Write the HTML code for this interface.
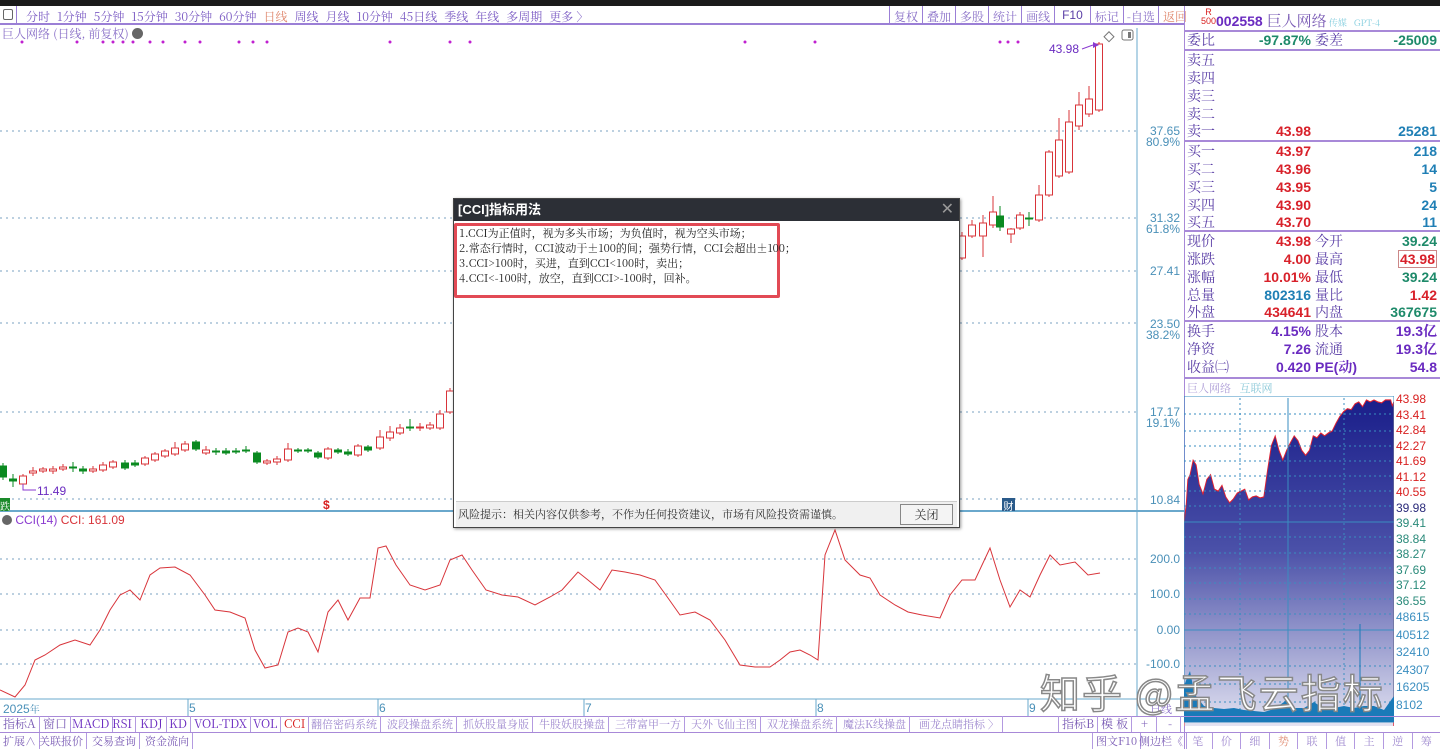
<!DOCTYPE html>
<html><head><meta charset="utf-8"><style>
*{margin:0;padding:0;box-sizing:border-box}
body{width:1440px;height:749px;overflow:hidden;background:#fff;position:relative;font-family:"Liberation Sans","Noto Sans CJK SC",sans-serif;}
.a{position:absolute;white-space:nowrap}
.tb span{display:inline-block;margin-right:7px}
.cjk{font-family:"Noto Serif CJK SC","Noto Sans CJK SC",serif}
.rp div.r{position:absolute;left:1187px;width:252px;height:18px;font-size:14px;line-height:18px;font-family:"Liberation Sans",sans-serif}
.rp .l{position:absolute;left:0;color:#5a3ea6;font-family:"Noto Serif CJK SC",serif}
.rp .v1{position:absolute;right:128px;font-weight:bold}
.rp .l2{position:absolute;left:128px;color:#5a3ea6;font-family:"Noto Serif CJK SC",serif}
.rp .v2{position:absolute;right:2px;font-weight:bold}
.rp .v2 .z,.rp .l .z{font-family:"Noto Serif CJK SC",serif}
.red{color:#d8212a}.grn{color:#1e8a6a}.blu{color:#1f7fb5}.pur{color:#6a2bc0}
.sep{position:absolute;left:1184px;width:256px;height:2px;background:#a889d8}
.bt{position:absolute;height:16px;font-size:12px;line-height:16px;border-right:1px solid #b39ae0;padding:0 3px;color:#7a5bb5}
</style></head><body>
<div class="a" style="left:0;top:0;width:1440px;height:6px;background:#1a1a1a"></div>
<div class="a" style="left:0;top:6px;width:1184px;height:19px;border-bottom:2px solid #9b7fd6;"></div>
<div class="a" style="left:3px;top:9px;width:10px;height:11px;border:1px solid #666;border-radius:2px"></div>
<div class="a" style="left:16px;top:6px;width:1px;height:19px;background:#9b7fd6"></div>
<div class="a tb cjk" style="left:26px;top:8px;font-size:12px;color:#7c5cc4;"><span>分时</span><span>1分钟</span><span>5分钟</span><span>15分钟</span><span>30分钟</span><span>60分钟</span><span style="color:#e08a70">日线</span><span>周线</span><span>月线</span><span>10分钟</span><span>45日线</span><span>季线</span><span>年线</span><span>多周期</span><span>更多 〉</span></div>
<div class="a cjk" style="left:889px;top:6px;height:19px;font-size:12px;color:#8a70c8;display:flex">
<span style="border-left:1px solid #9b7fd6;padding:2px 4px">复权</span><span style="border-left:1px solid #9b7fd6;padding:2px 4px">叠加</span><span style="border-left:1px solid #9b7fd6;padding:2px 4px">多股</span><span style="border-left:1px solid #9b7fd6;padding:2px 4px">统计</span><span style="border-left:1px solid #9b7fd6;padding:2px 4px">画线</span><span style="border-left:1px solid #9b7fd6;padding:2px 7px;color:#5a3ea6;font-family:'Liberation Sans',sans-serif">F10</span><span style="border-left:1px solid #9b7fd6;padding:2px 4px">标记</span><span style="border-left:1px solid #9b7fd6;padding:2px 3px">-自选</span><span style="border-left:1px solid #9b7fd6;padding:2px 4px;color:#e08a70">返回</span></div>
<div class="a cjk" style="left:2px;top:25px;font-size:12px;color:#8a70c8">巨人网络 (日线, 前复权) <span style="display:inline-block;width:11px;height:11px;border-radius:50%;background:#666;vertical-align:-1px"></span></div>

<svg class="a" style="left:0;top:0" width="1184" height="749">
<g stroke="#7aa0c0" stroke-dasharray="2,4" stroke-width="1">
<line x1="0" y1="131" x2="1137" y2="131"/><line x1="0" y1="218" x2="1137" y2="218"/><line x1="0" y1="271" x2="1137" y2="271"/><line x1="0" y1="323" x2="1137" y2="323"/><line x1="0" y1="412" x2="1137" y2="412"/><line x1="0" y1="499" x2="1137" y2="499"/>
<line x1="0" y1="559" x2="1137" y2="559"/><line x1="0" y1="594" x2="1137" y2="594"/><line x1="0" y1="630" x2="1137" y2="630"/><line x1="0" y1="664" x2="1137" y2="664"/>
</g>
<line x1="1137" y1="28" x2="1137" y2="716" stroke="#6aa8cc"/>
<line x1="0" y1="511" x2="1184" y2="511" stroke="#6aa8cc" stroke-width="2"/>
<line x1="0" y1="699" x2="1137" y2="699" stroke="#6aa8cc"/>
<line x1="1137" y1="699" x2="1184" y2="699" stroke="#6aa8cc"/>
<g stroke="#6aa8cc"><line x1="188" y1="699" x2="188" y2="716"/><line x1="378" y1="699" x2="378" y2="716"/><line x1="584" y1="699" x2="584" y2="716"/><line x1="816" y1="699" x2="816" y2="716"/><line x1="1028" y1="699" x2="1028" y2="716"/></g>
<g fill="#c020d0"><circle cx="22" cy="42" r="1.5"/><circle cx="77" cy="42" r="1.5"/><circle cx="103" cy="42" r="1.5"/><circle cx="113" cy="42" r="1.5"/><circle cx="123" cy="42" r="1.5"/><circle cx="133" cy="42" r="1.5"/><circle cx="150" cy="42" r="1.5"/><circle cx="163" cy="42" r="1.5"/><circle cx="185" cy="42" r="1.5"/><circle cx="200" cy="42" r="1.5"/><circle cx="239" cy="42" r="1.5"/><circle cx="253" cy="42" r="1.5"/><circle cx="267" cy="42" r="1.5"/><circle cx="390" cy="42" r="1.5"/><circle cx="450" cy="42" r="1.5"/><circle cx="470" cy="42" r="1.5"/><circle cx="745" cy="42" r="1.5"/><circle cx="815" cy="42" r="1.5"/><circle cx="1000" cy="42" r="1.5"/><circle cx="1008" cy="42" r="1.5"/><circle cx="1018" cy="42" r="1.5"/></g>
<g id="cd"></g>
<polyline fill="none" stroke="#d8343a" stroke-width="1" points="0,690 15,697 25,685 35,660 45,655 60,645 75,640 90,645 100,630 110,610 120,595 130,590 140,600 150,575 160,568 175,567 190,575 205,595 215,610 230,612 245,618 255,650 265,668 278,665 288,632 298,628 308,632 318,652 328,612 338,600 348,620 360,598 370,598 378,548 386,546 396,565 410,585 425,590 440,585 450,560 462,555 472,570 486,590 502,595 518,597 535,605 550,597 562,590 578,572 588,580 600,590 612,570 625,572 640,575 655,580 668,598 680,615 695,612 710,620 725,640 740,665 755,667 770,667 780,660 790,652 800,650 810,655 818,660 825,555 835,530 845,560 860,575 870,578 880,595 895,605 908,612 922,615 940,618 950,595 962,580 975,580 990,548 1000,580 1010,607 1020,590 1030,597 1040,575 1050,555 1060,565 1075,562 1088,575 1100,573"/>
<polyline fill="none" stroke="#8a3ad0" points="1082,49 1093,45"/><polygon fill="#8a3ad0" points="1093,42 1099,45 1093,48"/>
<polyline fill="none" stroke="#8a3ad0" points="36,490 23,490 23,484"/>
<rect x="1106" y="33" width="7" height="7" fill="none" stroke="#777" transform="rotate(45 1109 36)"/>
<rect x="1122" y="30" width="11" height="10" rx="2" fill="none" stroke="#777"/><rect x="1128" y="32" width="3" height="6" fill="#777"/>
</svg>
<div class="a" style="left:1049px;top:42px;font-size:12px;color:#6a2bc0">43.98</div>
<div class="a" style="left:37px;top:484px;font-size:12px;color:#6a2bc0">11.49</div>
<div class="a cjk" style="left:0;top:498px;width:10px;height:13px;background:#1a8a2a;color:#fff;font-size:10px">跌</div>
<div class="a" style="left:323px;top:498px;font-size:12px;color:#d82020;font-weight:bold">$</div>
<div class="a" style="left:1002px;top:498px;width:13px;height:13px;background:#2a5a8a;color:#fff;font-size:10px;text-align:center">财</div>
<div class="a" style="left:2px;top:513px;font-size:12px;color:#8a3ad0"><span style="display:inline-block;width:10px;height:10px;border-radius:50%;background:#666;vertical-align:-1px"></span> CCI(14) <span style="color:#d8343a">CCI: 161.09</span></div>
<div class="a" style="left:1140px;top:0;font-size:12px;color:#4a90b8;line-height:11px;text-align:right;width:40px">
<div style="position:absolute;right:0;top:126px">37.65<br>80.9%</div>
<div style="position:absolute;right:0;top:213px">31.32<br>61.8%</div>
<div style="position:absolute;right:0;top:266px">27.41</div>
<div style="position:absolute;right:0;top:319px">23.50<br>38.2%</div>
<div style="position:absolute;right:0;top:407px">17.17<br>19.1%</div>
<div style="position:absolute;right:0;top:495px">10.84</div>
<div style="position:absolute;right:0;top:554px">200.0</div>
<div style="position:absolute;right:0;top:589px">100.0</div>
<div style="position:absolute;right:0;top:625px">0.00</div>
<div style="position:absolute;right:0;top:659px">-100.0</div>
</div>
<div class="a" style="left:3px;top:701px;font-size:12px;color:#4a90b8">2025<span class="cjk" style="font-size:10px">年</span></div>
<div class="a" style="left:189px;top:701px;font-size:12px;color:#4a90b8">5</div>
<div class="a" style="left:379px;top:701px;font-size:12px;color:#4a90b8">6</div>
<div class="a" style="left:585px;top:701px;font-size:12px;color:#4a90b8">7</div>
<div class="a" style="left:817px;top:701px;font-size:12px;color:#4a90b8">8</div>
<div class="a" style="left:1029px;top:701px;font-size:12px;color:#4a90b8">9</div>
<div class="a cjk" style="left:1150px;top:701px;font-size:11px;color:#8a70c8">日线</div>

<div class="a" style="left:453px;top:198px;width:507px;height:330px;background:#fff;border:1px solid #444;box-shadow:1px 1px 3px rgba(0,0,0,.4)">
<div style="height:22px;background:#2c2f36;color:#fff;font-size:13px;font-weight:bold;line-height:22px;padding-left:4px;font-family:'Liberation Sans','Noto Sans CJK SC',sans-serif">[CCI]指标用法<span style="position:absolute;right:5px;top:0;font-weight:normal;color:#999;font-size:16px">✕</span></div>
<div class="a" style="left:0;top:24px;width:326px;height:75px;border:3px solid #e24a55;border-radius:2px"></div>
<div class="a cjk" style="left:5px;top:27px;font-size:11px;line-height:15px;color:#222">1.CCI为正值时，视为多头市场；为负值时，视为空头市场；<br>2.常态行情时，CCI波动于±100的间；强势行情，CCI会超出±100；<br>3.CCI&gt;100时，买进，直到CCI&lt;100时，卖出；<br>4.CCI&lt;-100时，放空，直到CCI&gt;-100时，回补。</div>
<div class="a" style="left:2px;top:302px;width:501px;height:26px;background:#f0f0f0;border-top:1px solid #ccc"></div>
<div class="a cjk" style="left:4px;top:307px;font-size:11px;color:#333">风险提示：相关内容仅供参考，不作为任何投资建议，市场有风险投资需谨慎。</div>
<div class="a cjk" style="left:446px;top:305px;width:53px;height:21px;border:1px solid #888;background:#f4f4f4;font-size:12px;text-align:center;line-height:19px;color:#333">关闭</div>
</div>

<div class="a" style="left:1184px;top:6px;width:1px;height:743px;background:#a889d8"></div>
<div class="a" style="left:1201px;top:8px;font-size:9px;color:#d82020;line-height:9px;text-align:center">R<br>500</div>
<div class="a" style="left:1216px;top:10px;font-size:14px;color:#6a2bc0;font-weight:bold">002558 <span class="cjk" style="font-weight:normal;font-size:15px;color:#7a5bb5">巨人网络</span><span class="cjk" style="font-size:9px;color:#8ad0e0;font-weight:normal"> 传媒 &nbsp; GPT-4</span></div>
<div class="sep" style="top:30px"></div><div class="sep" style="top:49px"></div><div class="sep" style="top:140px"></div><div class="sep" style="top:230px"></div><div class="sep" style="top:320px"></div><div class="sep" style="top:377px"></div>
<div class="rp">
<div class="r" style="top:31px"><span class="l">委比</span><span class="v1 grn">-97.87%</span><span class="l2">委差</span><span class="v2 grn">-25009</span></div>
<div class="r" style="top:51px"><span class="l">卖五</span></div>
<div class="r" style="top:69px"><span class="l">卖四</span></div>
<div class="r" style="top:87px"><span class="l">卖三</span></div>
<div class="r" style="top:105px"><span class="l">卖二</span></div>
<div class="r" style="top:122px"><span class="l">卖一</span><span class="v1 red">43.98</span><span class="v2 blu">25281</span></div>
<div class="r" style="top:142px"><span class="l">买一</span><span class="v1 red">43.97</span><span class="v2 blu">218</span></div>
<div class="r" style="top:160px"><span class="l">买二</span><span class="v1 red">43.96</span><span class="v2 blu">14</span></div>
<div class="r" style="top:178px"><span class="l">买三</span><span class="v1 red">43.95</span><span class="v2 blu">5</span></div>
<div class="r" style="top:196px"><span class="l">买四</span><span class="v1 red">43.90</span><span class="v2 blu">24</span></div>
<div class="r" style="top:213px"><span class="l">买五</span><span class="v1 red">43.70</span><span class="v2 blu">11</span></div>
<div class="r" style="top:232px"><span class="l">现价</span><span class="v1 red">43.98</span><span class="l2">今开</span><span class="v2 grn">39.24</span></div>
<div class="r" style="top:250px"><span class="l">涨跌</span><span class="v1 red">4.00</span><span class="l2">最高</span><span class="v2 red" style="border:1px solid #c88;padding:0 1px;line-height:16px">43.98</span></div>
<div class="r" style="top:268px"><span class="l">涨幅</span><span class="v1 red">10.01%</span><span class="l2">最低</span><span class="v2 grn">39.24</span></div>
<div class="r" style="top:286px"><span class="l">总量</span><span class="v1 blu">802316</span><span class="l2">量比</span><span class="v2 red">1.42</span></div>
<div class="r" style="top:303px"><span class="l">外盘</span><span class="v1 red">434641</span><span class="l2">内盘</span><span class="v2 grn">367675</span></div>
<div class="r" style="top:322px"><span class="l">换手</span><span class="v1 pur">4.15%</span><span class="l2">股本</span><span class="v2 pur">19.3<span class="z">亿</span></span></div>
<div class="r" style="top:340px"><span class="l">净资</span><span class="v1 pur">7.26</span><span class="l2">流通</span><span class="v2 pur">19.3<span class="z">亿</span></span></div>
<div class="r" style="top:358px"><span class="l">收益㈡</span><span class="v1 pur">0.420</span><span class="l2" style="font-family:'Liberation Sans','Noto Serif CJK SC',sans-serif;font-weight:bold;color:#6a2bc0">PE(动)</span><span class="v2 pur">54.8</span></div>
</div>
<div class="a cjk" style="left:1187px;top:380px;font-size:11px;color:#b0a0d8">巨人网络 &nbsp; <span style="color:#8ac8d8">互联网</span></div>
<svg class="a" style="left:1184px;top:396px" width="256" height="330">
<defs><linearGradient id="g" x1="0" y1="0" x2="0" y2="1"><stop offset="0" stop-color="#1a1e8a"/><stop offset="0.45" stop-color="#4a50a8"/><stop offset="1" stop-color="#e8e8f4"/></linearGradient></defs>
<path transform="matrix(0.76,0,0,0.97,0,-13.5)" fill="url(#g)" stroke="#e02030" stroke-width="1.2" d="M0,145 L3,125 5,100 8,95 12,80 16,85 20,105 25,115 30,100 35,95 40,110 45,112 50,106 55,118 60,124 65,120 70,114 75,112 80,110 85,121 90,118 95,117 100,119 105,118 110,90 115,65 120,55 125,70 130,80 135,70 140,62 145,55 150,60 155,70 160,75 165,70 170,55 175,57 180,52 185,55 190,52 195,50 200,42 205,35 210,30 215,27 220,28 225,22 230,20 235,25 240,18 245,20 250,18 255,20 260,21 265,18 272,18 274,24 276,20 276,360 0,360Z"/>
<g stroke="#3a8ec0" stroke-dasharray="2,3"><line x1="0" y1="18" x2="210" y2="18"/><line x1="0" y1="35" x2="210" y2="35"/><line x1="0" y1="50" x2="210" y2="50"/><line x1="0" y1="65" x2="210" y2="65"/><line x1="0" y1="80" x2="210" y2="80"/><line x1="0" y1="95" x2="210" y2="95"/><line x1="0" y1="110" x2="210" y2="110"/><line x1="0" y1="141" x2="210" y2="141"/><line x1="0" y1="157" x2="210" y2="157"/><line x1="0" y1="172" x2="210" y2="172"/><line x1="0" y1="187" x2="210" y2="187"/><line x1="0" y1="203" x2="210" y2="203"/><line x1="0" y1="218" x2="210" y2="218"/><line x1="0" y1="252" x2="210" y2="252"/><line x1="0" y1="270" x2="210" y2="270"/><line x1="0" y1="288" x2="210" y2="288"/><line x1="0" y1="306" x2="210" y2="306"/><line x1="56" y1="2" x2="56" y2="326"/><line x1="160" y1="2" x2="160" y2="326"/></g>
<rect x="0" y="0" width="210" height="326" fill="none" stroke="#3a8ec0"/>
<line x1="104" y1="2" x2="104" y2="326" stroke="#3a8ec0"/>
<line x1="0" y1="126" x2="210" y2="126" stroke="#3a8ec0"/><line x1="0" y1="234" x2="210" y2="234" stroke="#3a8ec0"/>
<rect x="210" y="0" width="50" height="330" fill="#fff"/>
<path fill="#1a7ab8" d="M0,326 L0,290 3,282 6,275 9,290 12,300 16,305 20,310 30,312 40,313 50,312 60,314 70,315 80,316 90,313 100,306 104,300 108,312 120,312 130,306 140,313 150,312 160,310 170,312 180,310 190,310 200,314 210,300 210,326Z"/>
<line x1="176" y1="326" x2="176" y2="228" stroke="#1a7ab8"/>
</svg>
<div class="a" style="left:1396px;top:392px;font-size:12px;line-height:15.5px;">
<div style="color:#d82020">43.98<br>43.41<br>42.84<br>42.27<br>41.69<br>41.12<br>40.55</div><div style="color:#2a2a7a">39.98</div><div style="color:#2a8a7a">39.41<br>38.84<br>38.27<br>37.69<br>37.12<br>36.55</div><div style="color:#3a8ec0;line-height:17.5px">48615<br>40512<br>32410<br>24307<br>16205<br>8102</div></div>

<div class="a" style="left:1040px;top:662px;font-size:40px;color:#fff;-webkit-text-stroke:1.5px #888;letter-spacing:2px;font-family:'Noto Sans CJK SC',sans-serif">知乎 @孟飞云指标</div>

<div class="a" style="left:0;top:716px;width:1440px;height:1px;background:#a889d8"></div>
<div class="a" style="left:0;top:732px;width:1440px;height:1px;background:#a889d8"></div>
<div class="cjk">
<div class="bt" style="left:0;top:716px">指标A</div><div class="bt" style="left:40px;top:716px">窗口</div><div class="bt" style="left:69px;top:716px;color:#6a2bc0">MACD</div><div class="bt" style="left:109px;top:716px;color:#6a2bc0">RSI</div><div class="bt" style="left:137px;top:716px;color:#6a2bc0">KDJ</div><div class="bt" style="left:166px;top:716px;color:#6a2bc0">KD</div><div class="bt" style="left:191px;top:716px;color:#6a2bc0">VOL-TDX</div><div class="bt" style="left:250px;top:716px;color:#6a2bc0">VOL</div><div class="bt" style="left:281px;top:716px;color:#d82020">CCI</div><div class="bt" style="left:308px;top:716px;font-size:11px;color:#a08ad0">翻倍密码系统</div><div class="bt" style="left:384px;top:716px;font-size:11px;color:#a08ad0">波段操盘系统</div><div class="bt" style="left:460px;top:716px;font-size:11px;color:#a08ad0">抓妖股量身版</div><div class="bt" style="left:536px;top:716px;font-size:11px;color:#a08ad0">牛股妖股操盘</div><div class="bt" style="left:612px;top:716px;font-size:11px;color:#a08ad0">三带富甲一方</div><div class="bt" style="left:688px;top:716px;font-size:11px;color:#a08ad0">天外飞仙主图</div><div class="bt" style="left:764px;top:716px;font-size:11px;color:#a08ad0">双龙操盘系统</div><div class="bt" style="left:840px;top:716px;font-size:11px;color:#a08ad0">魔法K线操盘</div><div class="bt" style="left:916px;top:716px;font-size:11px;color:#a08ad0">画龙点睛指标 〉</div>
<div class="bt" style="left:1058px;top:716px;border-left:1px solid #b39ae0">指标B</div><div class="bt" style="left:1098px;top:716px">模 板</div><div class="bt" style="left:1133px;top:716px;padding:0 8px">+</div><div class="bt" style="left:1160px;top:716px;padding:0 8px">-</div>
<div class="bt" style="left:0;top:733px;font-size:11px">扩展∧</div><div class="bt" style="left:36px;top:733px;font-size:11px">关联报价</div><div class="bt" style="left:89px;top:733px;font-size:11px">交易查询</div><div class="bt" style="left:142px;top:733px;font-size:11px">资金流向</div>
<div class="bt" style="left:1092px;top:733px;font-size:11px;border-left:1px solid #b39ae0">图文F10</div><div class="bt" style="left:1136px;top:733px;font-size:11px">侧边栏《</div>
<div class="a" style="left:1184px;top:733px;width:256px;height:16px;display:flex;font-size:11px;color:#a08ad0;line-height:16px">
<span style="flex:1;text-align:center;border-right:1px solid #b39ae0">笔</span><span style="flex:1;text-align:center;border-right:1px solid #b39ae0">价</span><span style="flex:1;text-align:center;border-right:1px solid #b39ae0">细</span><span style="flex:1;text-align:center;border-right:1px solid #b39ae0;color:#e08a70">势</span><span style="flex:1;text-align:center;border-right:1px solid #b39ae0">联</span><span style="flex:1;text-align:center;border-right:1px solid #b39ae0">值</span><span style="flex:1;text-align:center;border-right:1px solid #b39ae0">主</span><span style="flex:1;text-align:center;border-right:1px solid #b39ae0">逆</span><span style="flex:1;text-align:center">筹</span></div>
</div>
<script>
var C=[[3,466,477,'g',463,480],[13,479,481,'g',474,487],[23,476,484,'r',474,490],[33,471,473,'r',467,476],[43,469,471,'r',467,473],[53,469,471,'r',466,474],[63,467,469,'r',464,471],[73,467,468,'g',462,472],[83,469,471,'g',466,474],[93,469,471,'r',466,473],[103,465,470,'r',462,472],[113,462,467,'r',460,469],[125,463,468,'g',460,470],[135,463,465,'g',460,467],[145,458,464,'r',456,466],[155,454,460,'r',452,462],[165,451,456,'r',449,458],[175,448,454,'r',442,456],[185,444,450,'r',441,452],[196,442,449,'g',440,451],[206,450,453,'r',446,455],[216,451,452,'g',448,455],[226,451,453,'g',448,455],[236,451,452,'g',448,454],[246,450,451,'g',446,453],[257,453,462,'g',451,464],[267,461,463,'r',459,465],[277,459,462,'r',456,465],[288,449,460,'r',443,462],[298,450,451,'g',448,453],[308,450,451,'g',448,453],[318,453,457,'g',451,459],[328,449,458,'r',447,460],[338,450,452,'g',448,454],[348,452,454,'g',449,456],[358,446,455,'r',444,457],[368,447,450,'g',445,452],[380,437,448,'r',430,450],[390,432,438,'r',426,441],[400,428,433,'r',424,435],[410,427,428,'g',419,431],[420,427,428,'r',423,431],[430,425,428,'r',422,430],[440,414,428,'r',410,430],[450,391,412,'r',388,414],
[962,236,258,'r',232,260],[972,225,236,'r',220,238],[983,223,236,'r',215,257],[993,212,225,'r',196,228],[1000,216,227,'g',206,231],[1011,229,234,'r',228,243],[1020,215,228,'r',212,230],[1029,218,219,'g',212,226],[1039,195,220,'r',185,222],[1049,152,195,'r',150,197],[1059,140,176,'r',118,178],[1069,122,172,'r',110,174],[1079,105,126,'r',92,130],[1089,99,114,'r',86,117],[1099,44,110,'r',42,112]];
var s='';C.forEach(function(c){var col=c[3]=='r'?'#d8343a':'#0a8a20';s+='<line x1="'+c[0]+'" y1="'+c[4]+'" x2="'+c[0]+'" y2="'+c[5]+'" stroke="'+col+'"/>';var h=Math.max(1,c[2]-c[1]);s+='<rect x="'+(c[0]-3.5)+'" y="'+c[1]+'" width="7" height="'+h+'" fill="'+(c[3]=='r'?'#fff':col)+'" stroke="'+col+'"/>';});
document.getElementById('cd').innerHTML=s;
</script>
</body></html>
